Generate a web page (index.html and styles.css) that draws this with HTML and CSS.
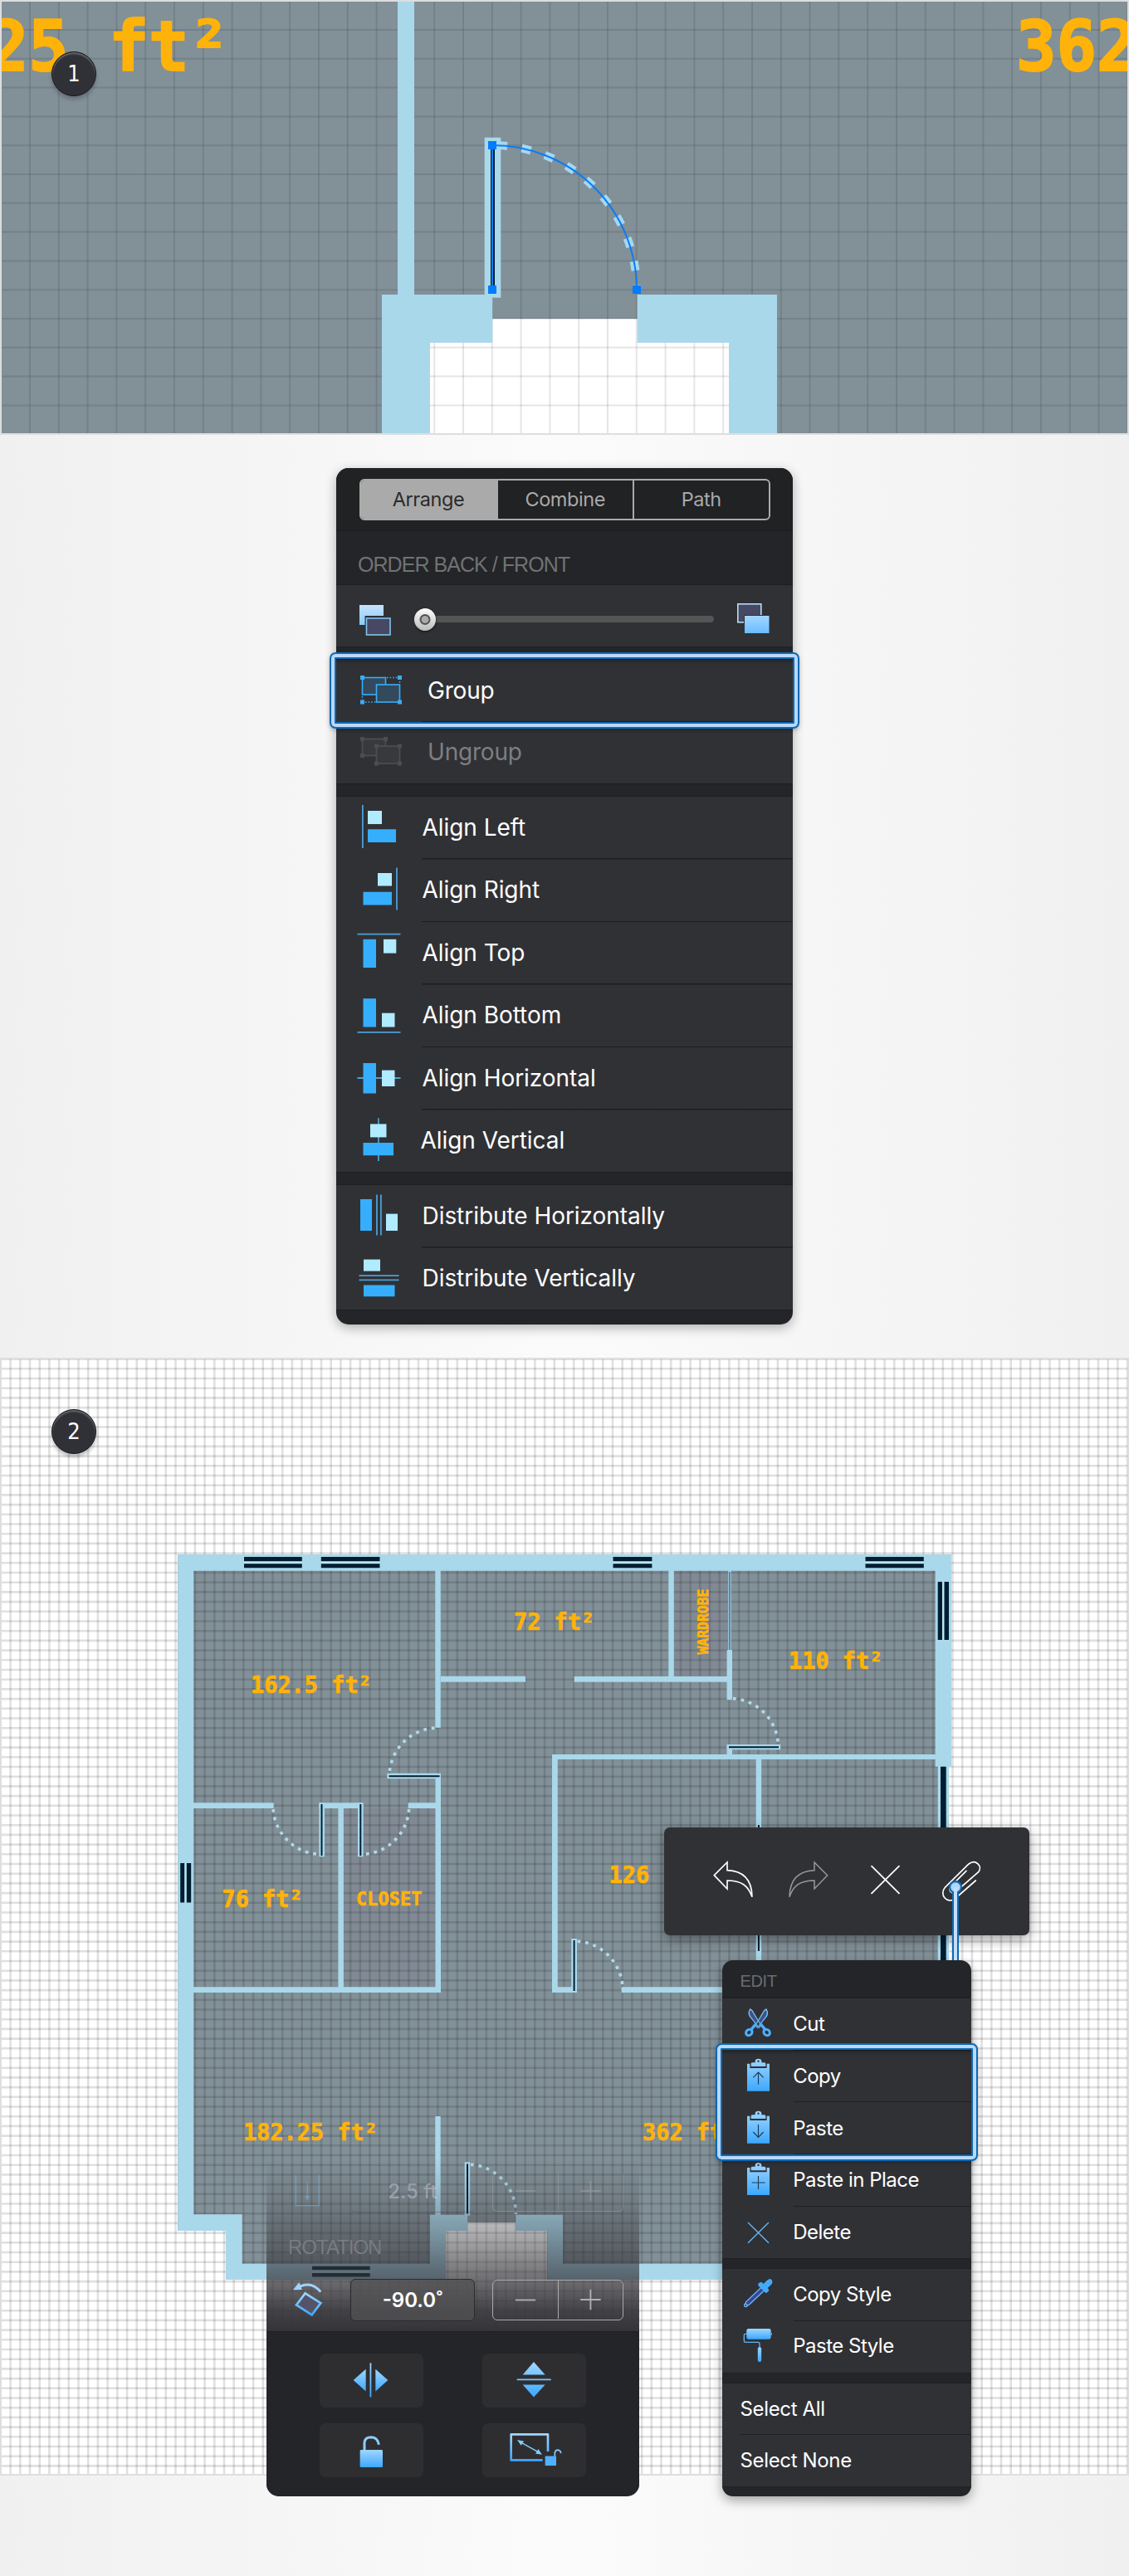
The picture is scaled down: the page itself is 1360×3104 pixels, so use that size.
FILE: index.html
```html
<!DOCTYPE html>
<html lang="en">
<head>
<meta charset="utf-8">
<title>Floor plan tutorial</title>
<link rel="stylesheet" href="styles.css">
</head>
<body>
<svg class="defs" width="0" height="0" aria-hidden="true">
  <defs>
    <linearGradient id="sky" x1="0" y1="0" x2="0" y2="1"><stop offset="0" stop-color="#a0d6ff"/><stop offset="1" stop-color="#3ca8ff"/></linearGradient>
    <linearGradient id="pale" x1="0" y1="0" x2="0" y2="1"><stop offset="0" stop-color="#c4e3fd"/><stop offset="1" stop-color="#8ccaff"/></linearGradient>
    <linearGradient id="front" x1="0" y1="0" x2="0" y2="1"><stop offset="0" stop-color="#a2d6fe"/><stop offset="1" stop-color="#6bbcff"/></linearGradient>
    <linearGradient id="steel" x1="0" y1="0" x2="0" y2="1"><stop offset="0" stop-color="#8fc3f0"/><stop offset="1" stop-color="#5a9fe0"/></linearGradient>
  </defs>
</svg>
<main class="page">
  <section class="stage stage-door">
    <svg class="plan" viewBox="0 0 1360 524" width="1360" height="524">
      <rect class="room" width="1360" height="524"/>
      <path class="paper" d="M593 384H768V413H878V524H518V413H593Z"/>
      <path class="grid" stroke-width="524" stroke-dasharray="2 32.8" d="M35 262H1360"/>
      <path class="grid" stroke-width="1360" stroke-dasharray="2 32.8" d="M680 35V524"/>
      <path class="wall" d="M479 0H499V355H593.3V413H518V524H460V355H479ZM767.6 355H936V524H878V413H767.6Z"/>
      <path d="M593 175A174 174 0 0 1 767 349" fill="none" stroke="#a4d8f2" stroke-width="10" stroke-dasharray="11.4 17.6" stroke-dashoffset="-6.7"/>
      <rect class="wall" x="583.7" y="165.7" width="19.6" height="193"/>
      <rect x="591" y="170" width="5" height="180" fill="#001e30"/>
      <path d="M593 349V175A174 174 0 0 1 767 349" fill="none" stroke="#0a7cf6" stroke-width="2"/>
      <path d="M588 170h10v10h-10ZM588 344h10v10h-10ZM762 344h10v10h-10Z" fill="#007dff"/>
      <text class="tag" font-size="84" x="-14" y="84.5" textLength="290" lengthAdjust="spacingAndGlyphs">25 ft²</text>
      <text class="tag" font-size="84" x="1224" y="84.5" textLength="145.5" lengthAdjust="spacingAndGlyphs">362</text>
    </svg>
    <span class="badge">1</span>
  </section>

  <section class="arrange-area">
    <div class="arrange">
      <header class="tabs-bar"><div class="tabs"><span class="on">Arrange</span><span>Combine</span><span>Path</span></div></header>
      <h2 class="label">ORDER BACK / FRONT</h2>
      <div class="order">
        <svg width="42" height="40" viewBox="0 0 42 40"><path d="M1 3H30V16H7.5V27H1Z" fill="url(#pale)"/><rect x="9.5" y="19" width="28.5" height="20" fill="#474864" stroke="#82c2ec" stroke-width="1.6"/></svg>
        <div class="slider"><i class="knob"></i></div>
        <svg width="42" height="40" viewBox="0 0 42 40"><rect x="3.8" y="1.8" width="28" height="22" fill="#474864" stroke="#b5dcf5" stroke-width="1.6"/><rect x="11" y="15" width="31" height="23" fill="#303135"/><rect x="12" y="16" width="29.5" height="21" fill="url(#front)"/></svg>
      </div>
      <div class="gap"></div>
      <div class="item wide picked">
        <svg width="56" height="56" viewBox="0 0 56 56"><g fill="#334a5c" stroke="#36aefc" stroke-width="1.6"><rect x="6.5" y="11.5" width="28" height="20.5"/><path d="M36 11.5H49M10 41H23" stroke-dasharray="1.6 2"/><path d="M51.500 16v3M6.500 34v4" stroke-dasharray="1.6 2"/><rect x="23.500" y="20" width="28" height="21"/></g><path d="M4 9h5v5H4ZM49 9h5v5h-5ZM4 38.500h5v5H4ZM49 38.500h5v5h-5Z" fill="#36aefc"/></svg>Group</div>
      <div class="item wide muted">
        <svg width="56" height="56" viewBox="0 0 56 56"><g fill="#38393c" stroke="#4c4d50" stroke-width="1.8"><rect x="6.5" y="11.500" width="28" height="20"/><rect x="23.500" y="20" width="28" height="21"/></g><path d="M4 9h5v5H4ZM32 9h5v5h-5ZM4 29h5v5H4ZM21 17.500h5v5h-5ZM49 17.500h5v5h-5ZM21 38.500h5v5h-5ZM49 38.500h5v5h-5Z" fill="#4c4d50"/></svg>Ungroup</div>
      <div class="gap"></div>
      <div class="item"><svg width="56" height="56" viewBox="0 0 56 56"><path class="rule" d="M6.900 0V52"/><path class="lite" d="M13 7H30V23H13Z"/><path class="blue" d="M13 29.300H47V45H13Z"/></svg>Align Left</div>
      <div class="item"><svg width="56" height="56" viewBox="0 0 56 56"><path class="rule" d="M48 .5V51.500"/><path class="lite" d="M25 7H42V22.500H25Z"/><path class="blue" d="M7.500 29.700H42V45.400H7.500Z"/></svg>Align Right</div>
      <div class="item"><svg width="56" height="56" viewBox="0 0 56 56"><path class="rule" d="M.5 4.700H52.500"/><path class="lite" d="M32 10.800H47.300V27.600H32Z"/><path class="blue" d="M7.500 10.800H23V45H7.500Z"/></svg>Align Top</div>
      <div class="item"><svg width="56" height="56" viewBox="0 0 56 56"><path class="rule" d="M.5 47.900H52.500"/><path class="lite" d="M30 24.700H45.500V41.500H30Z"/><path class="blue" d="M7.500 7.200H23V41.500H7.500Z"/></svg>Align Bottom</div>
      <div class="item"><svg width="56" height="56" viewBox="0 0 56 56"><path class="rule" d="M.5 27H52.500"/><path class="lite" d="M30 17.600H45.500V37H30Z"/><path class="blue" d="M7.500 9H23V45.500H7.500Z"/></svg>Align Horizontal</div>
      <div class="item last shifted"><svg width="56" height="56" viewBox="0 0 56 56"><path class="rule" d="M25.900 .3V52"/><path class="lite" d="M16 7.400H35.500V23.400H16Z"/><path class="blue" d="M7.500 30H44V45.300H7.500Z"/></svg>Align Vertical</div>
      <div class="gap"></div>
      <div class="item"><svg width="56" height="56" viewBox="0 0 56 56"><path class="rule" d="M24 1.500V50.500M28.900 1.500V50.500"/><path class="lite" d="M35 24.600H49V45H35Z"/><path class="blue" d="M4 7H18V45H4Z"/></svg>Distribute Horizontally</div>
      <div class="item last"><svg width="56" height="56" viewBox="0 0 56 56"><path class="rule" d="M2.500 24.200H50.600M2.500 29.300H50.600"/><path class="lite" d="M8 4.600H28V18.600H8Z"/><path class="blue" d="M8 35.400H45.500V49.300H8Z"/></svg>Distribute Vertically</div>
      <div class="focus"></div>
    </div>
  </section>

  <section class="stage stage-plan">
    <svg class="plan" viewBox="0 1636 1360 1347" width="1360" height="1347">
      <rect class="paper" y="1636" width="1360" height="1347"/>
      <path class="room" d="M214 1873H1136V2747H659V2688H621.500V2678H563V2688H537V2747H272V2688H214Z"/>
      <path d="M414 2179H524.500V2394H414ZM812 1893H877V2020H812Z" fill="#818a94"/>
      <path class="grid fine" stroke-width="1347" stroke-dasharray="2.6 9.1" d="M11.300 2309.500H1360"/>
      <path class="grid fine" stroke-width="1360" stroke-dasharray="2.6 9.1" d="M680 1636.300V2983"/>
      <g class="wall">
        <path d="M214.200 1873H1146.200V2128.700H1126.700V1892.700H233.200V2668.300H291.700V2727.700H518V2668.700H563.300V2688H537V2747H272V2688H214.200ZM621.300 2668.700H678V2727.700H900V2747H659.300V2688H621.300Z"/>
        <path d="M524.300 1892H530.800V2081.700H524.300ZM524.500 2137H531V2401H233V2394.300H407.400V2179H384.400V2172.300H437.600V2179H413.900V2394.300H524.500V2179H491.600V2172.300H524.500ZM233 2172.300H329.700V2179H233Z"/>
        <path d="M531 2019.700H633V2026.700H531ZM691.700 2020H805.300V1892H811.800V2020H875.600V1988.300H882V2048.300H875.600V2026.700H691.700ZM875.600 2102H882V2114H1127V2120H917.200V2394.300H1130V2401H748.700V2394.300H910.700V2120H671.800V2394.300H694.800V2401H665V2114H875.600Z"/>
        <path d="M1129.700 2128H1143V2983H1129.700ZM524.300 2550H530.700V2670H524.300ZM877.200 1892H880.600V1990H877.200Z"/>
      </g>
      <path class="door-arc" d="M527.500 2082A58.500 58.500 0 0 0 469 2140"/>
      <path class="door-arc" d="M329 2176A58.500 58.500 0 0 0 387.500 2234.500"/>
      <path class="door-arc" d="M492.800 2176A58.500 58.500 0 0 1 434.300 2234.500"/>
      <path class="door-arc" d="M691.600 2339A58.500 58.500 0 0 1 750 2397.500"/>
      <path class="door-arc" d="M879 2046.500A58.500 58.500 0 0 1 937.500 2105"/>
      <path class="door-arc" d="M563 2608A58.500 58.500 0 0 1 621.300 2668"/>
      <path class="wall" d="M466.300 2136.700H531V2143.300H466.300ZM384.400 2172.300H391V2237.300H384.400ZM431 2172.300H437.600V2237.300H431ZM688.200 2336H695V2401H688.200ZM875.600 2102H940.200V2108.300H875.600ZM559.700 2605.300H566.200V2669.700H559.700Z"/>
      <path class="ink-line" d="M468.500 2140.300H529.500M387.500 2174V2236M434.300 2174V2236M691.600 2338V2399M878 2105.300H938M563 2607.500V2667.500M913.900 2199V2351"/>
      <path d="M878.900 1894V1988" stroke="#3f6075" stroke-width="1.300"/>
      <path d="M294 1879.500H363.800V1886H294ZM386.800 1879.500H457.500V1886H386.800ZM738.500 1879.500H785.400V1886H738.500ZM1042.500 1879.500H1112.800V1886H1042.500ZM1134 1906H1139V1976H1134ZM221 2245H226V2292.500H221ZM376 2734H445.700V2740H376Z" fill="#bfe5f5"/>
      <path class="ink" d="M294 1876H363.800V1881.300H294ZM294 1884.300H363.800V1889.300H294ZM386.800 1876H457.500V1881.300H386.800ZM386.800 1884.300H457.500V1889.300H386.800ZM738.500 1876H785.400V1881.300H738.500ZM738.500 1884.300H785.400V1889.300H738.500ZM1042.500 1876H1112.800V1881.300H1042.500ZM1042.500 1884.300H1112.800V1889.300H1042.500ZM1129.700 1906H1135V1976H1129.700ZM1137.500 1906H1143V1976H1137.500ZM217.200 2245H222.200V2292.500H217.200ZM224.800 2245H230.200V2292.500H224.800ZM376 2730.700H445.700V2735.200H376ZM376 2739H445.700V2743.500H376ZM1133 2128.700H1139.700V2983H1133Z"/>
      <g class="tag" font-size="28.500">
        <text x="302" y="2040" textLength="145.800" lengthAdjust="spacingAndGlyphs">162.5 ft²</text>
        <text x="619" y="1964" textLength="97.200" lengthAdjust="spacingAndGlyphs">72 ft²</text>
        <text x="950" y="2010.500" textLength="113.400" lengthAdjust="spacingAndGlyphs">110 ft²</text>
        <text x="733.500" y="2268.500" textLength="113.400" lengthAdjust="spacingAndGlyphs">126 ft²</text>
        <text x="267.500" y="2298" textLength="97.200" lengthAdjust="spacingAndGlyphs">76 ft²</text>
        <text x="293" y="2578.500" textLength="162" lengthAdjust="spacingAndGlyphs">182.25 ft²</text>
        <text x="774" y="2578.500" textLength="113.400" lengthAdjust="spacingAndGlyphs">362 ft²</text>
        <text x="429" y="2296" font-size="23.500" textLength="79.500" lengthAdjust="spacingAndGlyphs">CLOSET</text>
        <text transform="translate(852.500 1993.500) rotate(-90)" font-size="18.500" textLength="79" lengthAdjust="spacingAndGlyphs">WARDROBE</text>
      </g>
    </svg>
    <span class="badge">2</span>

    <div class="toolbar">
      <svg viewBox="170 66 276 390" fill="none" stroke="#fff" stroke-width="5"><path d="M240 239L287 192V221C343 223 376 250 377 317C363 276 338 258 287 258V288Z"/></svg>
      <svg viewBox="446 66 276 390" fill="none" stroke="#98989b" stroke-width="4.500"><path d="M649 239L602 192V221C546 223 513 250 512 317C526 276 551 258 602 258V288Z"/></svg>
      <svg viewBox="722 66 276 390" fill="none" stroke="#fff" stroke-width="5.500" stroke-linecap="round"><path d="M809 206L908 304M908 206L809 304"/></svg>
      <svg viewBox="998 66 276 390" fill="none" stroke="#fff" stroke-width="5" stroke-linecap="round"><path d="M1151 223L1096 278C1082 292 1100 311 1114 297L1195 227C1211 206 1185 179 1160 198L1074 283C1052 310 1082 344 1110 324L1185 258"/></svg>
    </div>

    <div class="edit">
      <h2 class="edit-title">EDIT</h2>
      <div class="row"><svg viewBox="270 684 260 188"><path d="M371 723Q360 740 376 756L403 790L410 781L378 728ZM429 723Q440 740 424 756L397 790L390 781L422 728Z" fill="#35568b" stroke="url(#steel)" stroke-width="4"/><path d="M399 769L411 785Q421 788 429 790L421 800Z M401 769L389 785Q379 788 371 790L379 800Z" fill="#4eaef8"/><path d="M407 775L421 791M393 775L379 791" stroke="#4eaef8" stroke-width="10"/><ellipse cx="431" cy="807" rx="10" ry="12" transform="rotate(-50 431 807)" fill="none" stroke="#4eb0ff" stroke-width="9"/><ellipse cx="367" cy="807" rx="10" ry="12" transform="rotate(50 367 807)" fill="none" stroke="#4eb0ff" stroke-width="9"/></svg>Cut</div>
      <div class="row"><svg viewBox="270 872 260 188"><path fill="url(#sky)" d="M360 919H370V935H431V919H441V1018H360ZM374 929V919Q374 915 380 915H389V908Q391 901 400 901Q410 901 412 908V915H420Q427 915 427 919V929Z"/><circle cx="400.500" cy="910" r="3.500" fill="#303135"/><path d="M400.500 994V952M382 969L400.500 950L419 969" fill="none" stroke="#1d3c56" stroke-width="3.500"/></svg>Copy</div>
      <div class="row"><svg viewBox="270 1060 260 188"><path fill="url(#sky)" d="M360 1107H370V1123H431V1107H441V1206H360ZM374 1117V1107Q374 1103 380 1103H389V1096Q391 1089 400 1089Q410 1089 412 1096V1103H420Q427 1103 427 1107V1117Z"/><circle cx="400.500" cy="1098" r="3.500" fill="#303135"/><path d="M400.500 1138V1183M382 1165L400.500 1184L419 1165" fill="none" stroke="#1d3c56" stroke-width="3.500"/></svg>Paste</div>
      <div class="row"><svg viewBox="270 1248 260 188"><path fill="url(#sky)" d="M360 1296H370V1312H431V1296H441V1395H360ZM374 1306V1296Q374 1292 380 1292H389V1285Q391 1278 400 1278Q410 1278 412 1285V1292H420Q427 1292 427 1296V1306Z"/><circle cx="400.500" cy="1287" r="3.500" fill="#303135"/><path d="M400.500 1326V1374M377 1350H425" fill="none" stroke="#1d3c56" stroke-width="3.500"/></svg>Paste in Place</div>
      <div class="row last"><svg viewBox="60 296 260 188"><path d="M153 353L228 427M228 353L153 427" stroke="#67b6f2" stroke-width="4"/></svg>Delete</div>
      <div class="gap"></div>
      <div class="row"><svg viewBox="60 522 260 188"><path d="M207 583L218 594L160 649L150 656H142V649L147 640Z" fill="#34489a" stroke="#6cbcf8" stroke-width="4"/><path d="M190 576Q194 568 203 570L209 576L222 563Q233 554 239 562Q245 571 236 580L224 591L229 598Q227 607 217 609L190 583Z" fill="#41aafb"/><circle cx="145" cy="654" r="5" fill="#303135" stroke="#6cbcf8" stroke-width="4"/></svg>Copy Style</div>
      <div class="row last"><svg viewBox="60 710 260 188"><path d="M150 759H143Q139 759 139 764V784Q139 789 144 789H190Q195 789 195 794V810" fill="none" stroke="#5fb4f7" stroke-width="4"/><rect x="148" y="740" width="88" height="38" rx="7" fill="url(#sky)"/><path d="M236 755h4v8h-4Z" fill="#4eaef8"/><rect x="188.500" y="807" width="13" height="53" rx="6" fill="url(#sky)"/></svg>Paste Style</div>
      <div class="gap"></div>
      <div class="row plain">Select All</div>
      <div class="row plain last">Select None</div>
      <div class="focus edit-focus"></div>
    </div>
    <svg class="leader" width="20" height="104" viewBox="0 0 20 104"><path d="M10 16V98" stroke="#0d69b2" stroke-width="8"/><circle cx="10" cy="10" r="8" fill="#0d69b2"/><circle cx="10" cy="10" r="5.800" fill="#b3d4fc"/><path d="M10 10V98" stroke="#c4defd" stroke-width="4"/></svg>

    <div class="transform">
      <div class="size-row">
        <svg class="tool" viewBox="145 170 140 140" width="46.700" height="46.700"><path d="M170 182V292H254V182M212 207V263M206 259h12l-6 11Z" fill="none" stroke="#7cc6f7" stroke-width="4.500"/></svg>
        <span class="field">2.5 ft</span>
        <span class="stepper"><svg viewBox="0 0 78 49"><path d="M26 24.500H52"/></svg><svg viewBox="0 0 78 49"><path d="M26 24.500H52M39 11.500V37.500"/></svg></span>
      </div>
      <h2 class="label-rotation">ROTATION</h2>
      <div class="rotation-row">
        <svg class="tool" viewBox="145 560 140 140" width="46.700" height="46.700"><path d="M185 581Q228 562 260 601" fill="none" stroke="#9fd3fb" stroke-width="9"/><path d="M160 594L182 566L193 593Z" fill="#9fd3fb"/><path d="M204 606L260 641L228 684L172 648Z" fill="#54536a" stroke="url(#sky)" stroke-width="8"/></svg>
        <span class="field">-90.0˚</span>
        <span class="stepper"><svg viewBox="0 0 78 49"><path d="M26 25H52"/></svg><svg viewBox="0 0 78 49"><path d="M26 24.500H52M39 11.500V37.500"/></svg></span>
      </div>
      <div class="buttons">
        <span class="btn"><svg viewBox="256 827 375 193"><path fill="url(#sky)" d="M378 923L423 883V963ZM503 923L458 883V963Z"/><rect x="437.500" y="861" width="5.500" height="123" fill="url(#sky)"/></svg></span>
        <span class="btn"><svg viewBox="844 827 375 193"><path fill="url(#sky)" d="M1030 857L1071 903H990ZM1030 984L990 939H1071Z"/><rect x="969" y="918" width="123" height="5.500" fill="#74befa"/></svg></span>
        <span class="btn"><svg viewBox="256 1080 375 193"><path d="M418 1180V1150Q419 1130 443 1130Q466 1131 470 1157" fill="none" stroke="#8fcdfb" stroke-width="9"/><rect x="402" y="1176" width="82" height="63" rx="4" fill="url(#sky)"/></svg></span>
        <span class="btn"><svg viewBox="844 1080 375 193"><path d="M1062 1213H948V1120H1081V1182" fill="none" stroke="url(#sky)" stroke-width="8" stroke-linejoin="round"/><path d="M980 1147L1050 1186" stroke="#86c9fb" stroke-width="4.500"/><path d="M970 1140L994 1144L984 1160ZM1060 1193L1036 1189L1046 1173Z" fill="#86c9fb"/><path d="M1106 1200V1186Q1108 1176 1117 1176Q1127 1177 1128 1188" fill="none" stroke="#86c9fb" stroke-width="5"/><rect x="1071" y="1198" width="40" height="35" rx="2" fill="#4fb1ff"/></svg></span>
      </div>
    </div>
  </section>
</main>
</body>
</html>
```
FILE: styles.css
```css
* { box-sizing: border-box; }

body {
  margin: 0;
  font-family: Inter, Roboto, "Liberation Sans", sans-serif;
  color: #fff;
}

h2 { margin: 0; font-weight: 400; font-family: "Liberation Sans", Arial, sans-serif; }

.defs { position: absolute; }

.page {
  width: 1360px;
  height: 3104px;
  background: linear-gradient(90deg, #f0f0f0, #fbfbfb 50%, #f0f0f0);
}

/* canvases */
.stage { position: relative; }
.stage-door { height: 524px; }
.stage-plan { height: 1347px; }
.stage-door::after, .stage-plan::before {
  content: "";
  position: absolute;
  inset: 0;
  border: 2px solid #dededf;
}
.plan { display: block; }
.room { fill: #829098; }
.paper { fill: #fff; }
.wall { fill: #a9d8eb; }
.ink { fill: #001e30; }
.ink-line { fill: none; stroke: #001e30; stroke-width: 2; }
.grid { fill: none; stroke: #000; stroke-opacity: .1; }
.grid.fine { stroke-opacity: .12; }
.door-arc { fill: none; stroke: #b0daea; stroke-width: 3.6; stroke-dasharray: 3.8 5.86; stroke-dashoffset: -4; }
.tag { fill: #ffb30a; stroke: #ffb30a; stroke-width: .025em; font-family: "DejaVu Sans Mono", monospace; font-weight: 700; white-space: pre; }

.badge {
  position: absolute;
  left: 62px;
  top: 62px;
  width: 54px;
  height: 54px;
  border: 1.500px solid #16171a;
  border-radius: 50%;
  background: #303136;
  box-shadow: inset 0 2px 2px rgba(255, 255, 255, .28), 0 4px 4px rgba(40, 35, 55, .28);
  font: 27px/51px "DejaVu Sans Condensed", "DejaVu Sans", sans-serif;
  text-align: center;
}

/* arrange panel */
.arrange-area { height: 1112px; padding-top: 40px; display: flex; justify-content: center; }
.arrange {
  position: relative;
  width: 550px;
  height: 1032px;
  border-radius: 15px;
  background: #242528;
  box-shadow: 0 4px 14px rgba(0, 0, 0, .3);
}
.tabs-bar { height: 76px; padding: 13px 27.500px; background: #202224; border-radius: 15px 15px 0 0; border-bottom: 1.500px solid #1c1d1f; }
.tabs { display: grid; grid-template-columns: 163px 164.500px 1fr; height: 50px; border: 2px solid #aaa; border-radius: 6px; overflow: hidden; }
.tabs span { color: #a9a9a9; font-size: 23.500px; letter-spacing: -.4px; line-height: 45px; text-align: center; border-left: 2px solid #aaa; }
.tabs .on { background: #aaa; color: #292a2c; border-left: 0; }
.label { height: 65px; padding: 17px 26px 0; font-size: 25px; line-height: 46px; letter-spacing: -.95px; color: #717274; border-bottom: 1px solid #1c1d1f; }
.order { height: 75px; display: flex; align-items: center; padding: 8px 0 0 26.500px; background: #303135; border-bottom: 1px solid #1d1e20; }
.slider { width: 363px; height: 8px; margin: 0 25.500px 0 23px; border-radius: 4px; background: #555556; display: flex; align-items: center; }
.knob { width: 26px; height: 27px; margin-left: 2px; border-radius: 50%; background: radial-gradient(circle, #aaa 4px, #444 5px, #666 6px, transparent 7px), linear-gradient(#fff, #bbb); box-shadow: -4px 0 0 -1px #303135, 0 1px 3px #111; }
.arrange .gap { height: 15px; background: #242528; border-bottom: 1.500px solid #1d1e20; }
.item {
  display: flex;
  align-items: center;
  height: 75.500px;
  padding: 0 0 2px 25px;
  gap: 22.500px;
  font-size: 28px;
  letter-spacing: -.05px;
  background: linear-gradient(#1d1e20, #1d1e20) no-repeat 103px 100% / 100% 1.500px, #303135;
}
.item svg { flex: none; margin-top: 2px; }
.item.wide { height: 75px; gap: 29px; letter-spacing: -.2px; }
.item.last, .item.muted { background: #303135; border-bottom: 1.500px solid #1d1e20; }
.item.muted { color: #7d7e81; }
.item.shifted { gap: 20.500px; }
.lite { fill: #b0ebff; }
.blue { fill: #36aefe; }
.rule { fill: none; stroke: #4a9fd8; stroke-width: 1.800; }

/* highlight frame drawn over a menu */
.focus {
  position: absolute;
  left: -8px;
  top: 222px;
  width: 566px;
  height: 92px;
  border: 2px solid #0d69b2;
  border-radius: 7px;
  box-shadow: inset 0 0 0 4px #b9d8fb, inset 0 0 0 6px #0d69b2, inset 0 8px 5px rgba(0, 0, 0, .35), 0 2px 5px rgba(0, 0, 0, .25);
}
.edit-focus { top: 100px; width: 316px; height: 142px; }

/* floating toolbar */
.toolbar {
  position: absolute;
  left: 800px;
  top: 566px;
  width: 440px;
  height: 130px;
  display: flex;
  padding-left: 36.670px;
  border-radius: 7px;
  background: #303135;
  box-shadow: 0 5px 16px rgba(0, 0, 0, .38);
}
.toolbar svg { width: 92px; height: 130px; }

/* edit menu */
.edit {
  position: absolute;
  left: 870px;
  top: 726px;
  width: 300px;
  height: 645.700px;
  border-radius: 13px;
  background: #242528;
  box-shadow: 0 5px 14px rgba(0, 0, 0, .35);
}
.edit-title { height: 46.300px; padding: 3px 21.500px 0; font-size: 20px; line-height: 45px; letter-spacing: -.4px; color: #6b6c6f; border-bottom: 1px solid #1c1d1f; }
.row {
  display: flex;
  align-items: center;
  height: 62.700px;
  padding-bottom: 1.500px;
  font-size: 24px;
  letter-spacing: -.5px;
  background: linear-gradient(#1f2022, #1f2022) no-repeat 86px 100% / 100% 1.300px, #303135;
}
.row svg { width: 86.670px; height: 62.700px; margin: 1.500px -1.500px 0 0; flex: none; }
.row.plain { padding-left: 21.500px; letter-spacing: -.35px; background-position: 21px 100%, 0 0; }
.row.last { background: #303135; border-bottom: 1px solid #1f2022; }
.edit .gap { height: 12.400px; background: #242528; border-bottom: 1px solid #1f2022; }
.leader { position: absolute; left: 1141px; top: 628px; }

/* transform panel, fading out towards its top */
.transform {
  position: absolute;
  left: 321px;
  top: 964px;
  width: 449px;
  height: 407.700px;
  border-radius: 0 0 15px 15px;
  background: linear-gradient(rgba(52, 51, 56, 0), rgba(52, 51, 56, .16) 42px, rgba(52, 51, 56, .38) 86px, rgba(52, 51, 56, .7) 145px, rgba(52, 51, 56, .93) 185px, #343338 209px);
}
.transform::before {
  content: "";
  position: absolute;
  inset: 209px 0 0;
  z-index: -1;
  border-radius: 0 0 15px 15px;
  box-shadow: 0 5px 14px rgba(0, 0, 0, .35);
}
.size-row, .rotation-row { display: flex; align-items: center; height: 50px; padding: 0 19px 0 27px; }
.size-row { margin-top: 15px; opacity: .38; }
.tool { flex: none; }
.field {
  width: 151px;
  height: 51px;
  margin: 0 21px 0 27px;
  border: 1.500px solid #2c2c2f;
  border-radius: 6px;
  background: rgba(82, 82, 83, .75);
  font-size: 24px;
  font-weight: 600;
  line-height: 49px;
  text-align: center;
}
.size-row .field { background: none; border-color: transparent; border-bottom-color: #445; font-weight: 500; color: #dde; }
.stepper { display: flex; width: 158px; height: 49px; border: 1.500px solid #aaa9ab; border-radius: 6px; }
.size-row .stepper { border-top-color: transparent; }
.stepper svg { width: 50%; height: 46px; fill: none; stroke: #b0afb1; stroke-width: 2; }
.stepper svg + svg { border-left: 1.500px solid #aaa9ab; }
.label-rotation { height: 81px; padding: 28px 26px 0; font-size: 24px; line-height: 30px; letter-spacing: -1px; color: #767c83; }
.buttons {
  display: grid;
  grid-template-columns: 125px 125px;
  gap: 19.500px 71px;
  justify-content: center;
  margin-top: 13px;
  height: 198.700px;
  padding-top: 26px;
  align-content: start;
  background: #242528;
  border-top: 1.500px solid #1e1f21;
  border-radius: 0 0 15px 15px;
}
.btn { height: 64.500px; border-radius: 7px; background: #2e2e31; }
.btn svg { display: block; width: 125px; height: 64.500px; }
```
